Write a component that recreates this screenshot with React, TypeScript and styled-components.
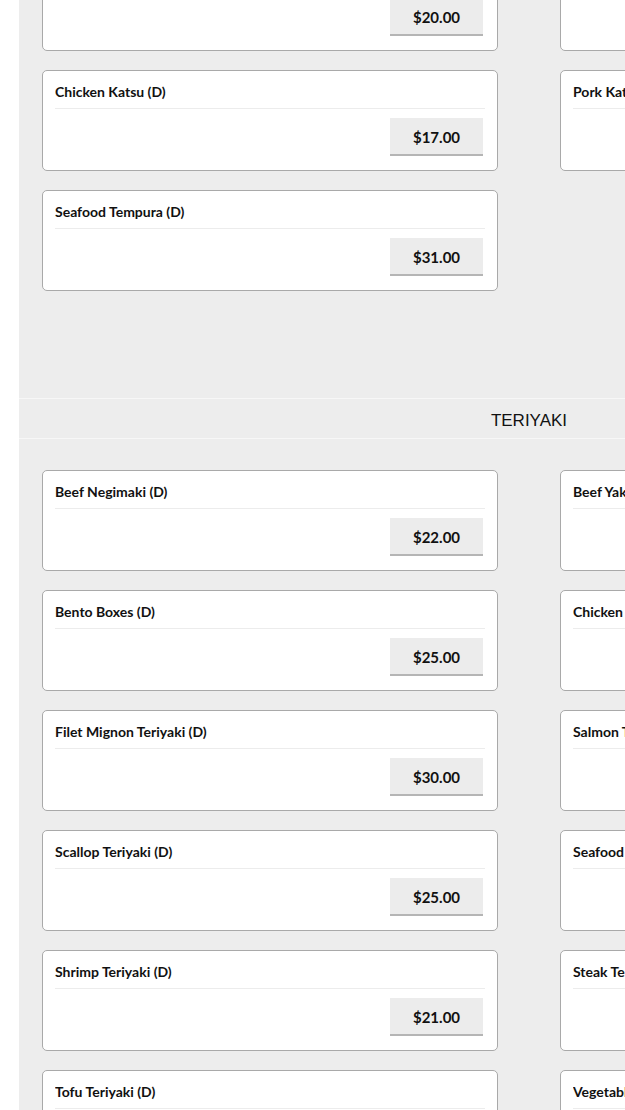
import styled, { createGlobalStyle } from 'styled-components';

const GlobalStyle = createGlobalStyle`
  html, body {
    margin: 0;
    padding: 0;
    overflow: hidden;
    background: #fff;
  }
  body {
    font-family: Lato, 'Noto Sans', sans-serif;
    color: #111;
  }
`;

const Page = styled.main`
  margin-left: 19px;
  width: 1020px;
  margin-top: -50px;
  background-color: #ededed;
  min-height: 1300px;
`;

const Section = styled.section`
  padding-bottom: 107px;
`;

const SectionHeader = styled.h2`
  margin: 0;
  height: 41px;
  box-sizing: border-box;
  padding-top: 4px;
  display: flex;
  align-items: center;
  justify-content: center;
  border-top: 1px solid #f7f7f7;
  border-bottom: 1px solid #f7f7f7;
  font-family: 'Liberation Sans', Arial, sans-serif;
  font-weight: 400;
  font-size: 17px;
  color: #111;
`;

const Grid = styled.div<{ top: number }>`
  display: grid;
  grid-template-columns: 456px 456px;
  column-gap: 62px;
  row-gap: 19px;
  padding: ${(props) => props.top}px 23px 0;
`;

const Card = styled.div`
  height: 101px;
  box-sizing: border-box;
  background-color: #fff;
  border: 1px solid #a9a9a9;
  border-radius: 5px;
  padding: 0 12px;
  display: flex;
  flex-direction: column;
`;

const ItemName = styled.div`
  font-size: 14px;
  font-weight: 700;
  height: 33px;
  padding-top: 4px;
  display: flex;
  align-items: center;
  border-bottom: 1px solid #ececec;
  white-space: nowrap;
  overflow: hidden;
`;

const PriceRow = styled.div`
  display: flex;
  justify-content: flex-end;
  padding: 9px 2px 0 0;
`;

const PriceButton = styled.button`
  width: 93px;
  height: 38px;
  border: 0;
  border-bottom: 2px solid #b5b5b5;
  background-color: #ececec;
  font-family: Lato, 'Noto Sans', sans-serif;
  font-size: 15px;
  font-weight: 700;
  color: #111;
  padding: 2px 0 0;
  cursor: pointer;
`;

interface Item {
  name: string;
  price: string;
}

const katsu: Item[] = [
  { name: 'Beef Katsu (D)', price: '$20.00' },
  { name: 'Fish Katsu (D)', price: '$18.00' },
  { name: 'Chicken Katsu (D)', price: '$17.00' },
  { name: 'Pork Katsu (D)', price: '$17.00' },
  { name: 'Seafood Tempura (D)', price: '$31.00' },
];

const teriyaki: Item[] = [
  { name: 'Beef Negimaki (D)', price: '$22.00' },
  { name: 'Beef Yakitori (D)', price: '$20.00' },
  { name: 'Bento Boxes (D)', price: '$25.00' },
  { name: 'Chicken Teriyaki (D)', price: '$18.00' },
  { name: 'Filet Mignon Teriyaki (D)', price: '$30.00' },
  { name: 'Salmon Teriyaki (D)', price: '$24.00' },
  { name: 'Scallop Teriyaki (D)', price: '$25.00' },
  { name: 'Seafood Teriyaki (D)', price: '$28.00' },
  { name: 'Shrimp Teriyaki (D)', price: '$21.00' },
  { name: 'Steak Teriyaki (D)', price: '$26.00' },
  { name: 'Tofu Teriyaki (D)', price: '$16.00' },
  { name: 'Vegetable Teriyaki (D)', price: '$16.00' },
];

const MenuCard = ({ item }: { item: Item }) => (
  <Card>
    <ItemName>{item.name}</ItemName>
    <PriceRow>
      <PriceButton>{item.price}</PriceButton>
    </PriceRow>
  </Card>
);

export default function App() {
  return (
    <>
      <GlobalStyle />
      <Page>
        <Section>
          <Grid top={0}>
            {katsu.map((item) => (
              <MenuCard key={item.name} item={item} />
            ))}
          </Grid>
        </Section>
        <Section>
          <SectionHeader>TERIYAKI</SectionHeader>
          <Grid top={31}>
            {teriyaki.map((item) => (
              <MenuCard key={item.name} item={item} />
            ))}
          </Grid>
        </Section>
      </Page>
    </>
  );
}
